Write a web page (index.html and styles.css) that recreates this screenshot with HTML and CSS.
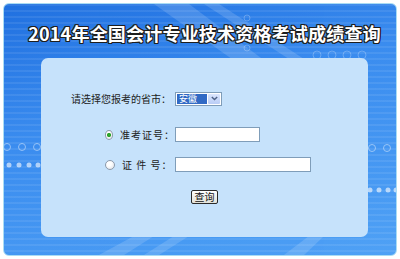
FILE: index.html
```html
<!DOCTYPE html>
<html lang="zh-CN">
<head>
<meta charset="utf-8">
<title>2014年全国会计专业技术资格考试成绩查询</title>
<link rel="stylesheet" href="styles.css">
</head>
<body>
<div class="frame">
  <svg class="deco" width="392" height="251" viewBox="0 0 392 251" aria-hidden="true">
    <g fill="#ffffff" opacity="0.14">
      <polygon points="150,0 185,0 265,60 235,60"/>
      <polygon points="200,0 215,0 300,55 285,55"/>
      <polygon points="95,251 120,251 150,232 130,232"/>
      <polygon points="140,251 155,251 185,232 170,232"/>
      <polygon points="280,251 300,251 320,232 305,232"/>
    </g>
    <g fill="none" stroke="#ffffff" stroke-width="1" opacity="0.45">
      <circle cx="3" cy="143" r="3.5"/>
      <circle cx="18" cy="143" r="3.5"/>
      <circle cx="33" cy="143" r="3.5"/>
      <circle cx="368" cy="144" r="3.5"/>
      <circle cx="383" cy="144" r="3.5"/>
    </g>
    <g fill="none" stroke="#ffffff" stroke-width="1" opacity="0.25">
      <circle cx="313" cy="51" r="4"/>
      <circle cx="328" cy="51" r="4"/>
      <circle cx="343" cy="51" r="4"/>
      <circle cx="358" cy="51" r="4"/>
      <circle cx="243" cy="14" r="3"/>
      <circle cx="243" cy="44" r="3"/>
    </g>
    <g fill="#ffffff" opacity="0.6">
      <circle cx="5" cy="161" r="2.5"/>
      <circle cx="15" cy="161" r="2.5"/>
      <circle cx="25" cy="161" r="2.5"/>
      <circle cx="34" cy="161" r="2.5"/>
      <circle cx="366" cy="186" r="2.5"/>
      <circle cx="375" cy="186" r="2.5"/>
      <circle cx="384" cy="186" r="2.5"/>
      <circle cx="392" cy="186" r="2.5"/>
    </g>
  </svg>

  <h1 class="title">2014年全国会计专业技术资格考试成绩查询</h1>

  <div class="panel">
    <div class="row row-prov">
      <span class="lbl">请选择您报考的省市：</span>
      <div class="select">
        <span class="sel-val">安徽</span>
        <span class="sel-btn">
          <svg width="7" height="5" viewBox="0 0 7 5"><path d="M0.8 1 L3.5 3.6 L6.2 1" fill="none" stroke="#4d6185" stroke-width="1.4"/></svg>
        </span>
      </div>
    </div>
    <div class="row row-zkz">
      <span class="lbl lbl-radio"><span class="radio on"></span><span class="rtext">准考证号：</span></span>
      <input class="inp inp-short" type="text">
    </div>
    <div class="row row-zj">
      <span class="lbl lbl-radio"><span class="radio"></span><span class="rtext">证&nbsp;件&nbsp;号：</span></span>
      <input class="inp inp-long" type="text">
    </div>
    <div class="row row-btn">
      <button class="btn" type="button">查询</button>
    </div>
  </div>
</div>
</body>
</html>
```

FILE: styles.css
```css
body {
  margin: 0;
  background: #ffffff;
  font-family: "Noto Sans CJK SC", "Noto Sans", sans-serif;
}

.frame {
  position: relative;
  margin: 3px 0 0 3px;
  width: 394px;
  height: 253px;
  box-sizing: border-box;
  border: 1px solid #a9dcf4;
  border-radius: 6px;
  overflow: hidden;
  background:
    repeating-linear-gradient(to bottom, rgba(255,255,255,0.08) 0 2px, rgba(255,255,255,0) 2px 6px),
    linear-gradient(165deg, #2070e0 0%, #3a8cef 40%, #4fa1f5 100%);
}

.deco {
  position: absolute;
  left: 0;
  top: 0;
}

.title {
  position: relative;
  margin: 0;
  height: 54px;
  box-sizing: border-box;
  padding: 4px 0 0 9px;
  display: flex;
  align-items: center;
  justify-content: center;
  color: #ffffff;
  font-size: 18px;
  font-weight: 700;
  letter-spacing: 0.2px;
  white-space: nowrap;
  text-shadow:
    -1px -1px 0 #1e1e1e, 1px -1px 0 #1e1e1e,
    -1px 1px 0 #1e1e1e, 1px 1px 0 #1e1e1e,
    0 -1px 0 #1e1e1e, 0 1px 0 #1e1e1e,
    -1px 0 0 #1e1e1e, 1px 0 0 #1e1e1e;
}

.panel {
  position: relative;
  margin-left: 37px;
  width: 327px;
  height: 179px;
  box-sizing: border-box;
  padding-top: 34px;
  background: #c6e2fb;
  border-radius: 7px;
  font-size: 10px;
  color: #222222;
}

.row {
  display: flex;
  align-items: center;
}

.row-prov { height: 13px; }
.row-zkz { height: 15px; margin-top: 22px; }
.row-zj { height: 15px; margin-top: 15px; }
.row-btn { height: 14px; margin-top: 18px; padding-left: 150px; }

.lbl {
  width: 134px;
  box-sizing: border-box;
  padding-right: 4px;
  text-align: right;
  line-height: 13px;
  white-space: nowrap;
}

.lbl-radio {
  display: flex;
  align-items: center;
  padding-left: 64px;
  padding-right: 0;
  text-align: left;
}

.rtext {
  margin-left: 7px;
  letter-spacing: 1px;
}

.radio {
  width: 10px;
  height: 10px;
  box-sizing: border-box;
  border: 1px solid #8d9aab;
  border-radius: 50%;
  background: radial-gradient(circle at 40% 35%, #ffffff 0, #ffffff 30%, #d9dde3 100%);
}

.radio.on {
  background:
    radial-gradient(circle, #2da42d 0, #2da42d 1.8px, rgba(45,164,45,0) 2.4px),
    radial-gradient(circle at 40% 35%, #ffffff 0, #ffffff 30%, #d9dde3 100%);
}

.select {
  display: flex;
  width: 47px;
  height: 14px;
  box-sizing: border-box;
  border: 1px solid #7f9db9;
  background: #ffffff;
  padding: 1px;
}

.sel-val {
  flex: 1;
  background: #316ac5;
  color: #ffffff;
  font-size: 9px;
  line-height: 10px;
  height: 10px;
  padding-left: 2px;
  white-space: nowrap;
}

.sel-btn {
  width: 12px;
  margin-left: 1px;
  display: flex;
  align-items: center;
  justify-content: center;
  background: linear-gradient(#dbe6fd, #b9cdf6);
  border-radius: 1px;
}

.inp {
  margin: 0;
  padding: 0;
  height: 15px;
  box-sizing: border-box;
  border: 1px solid #7f9db9;
  background: #ffffff;
  outline: none;
}

.inp-short { width: 85px; }
.inp-long { width: 136px; }

.btn {
  width: 27px;
  height: 14px;
  margin: 0;
  padding: 0;
  box-sizing: border-box;
  border: 1px solid #2b2b2b;
  border-radius: 2px;
  background: linear-gradient(#ffffff, #e2e2da);
  font-family: "Noto Sans CJK SC", "Noto Sans", sans-serif;
  font-size: 10px;
  line-height: 12px;
  color: #111111;
}
```
